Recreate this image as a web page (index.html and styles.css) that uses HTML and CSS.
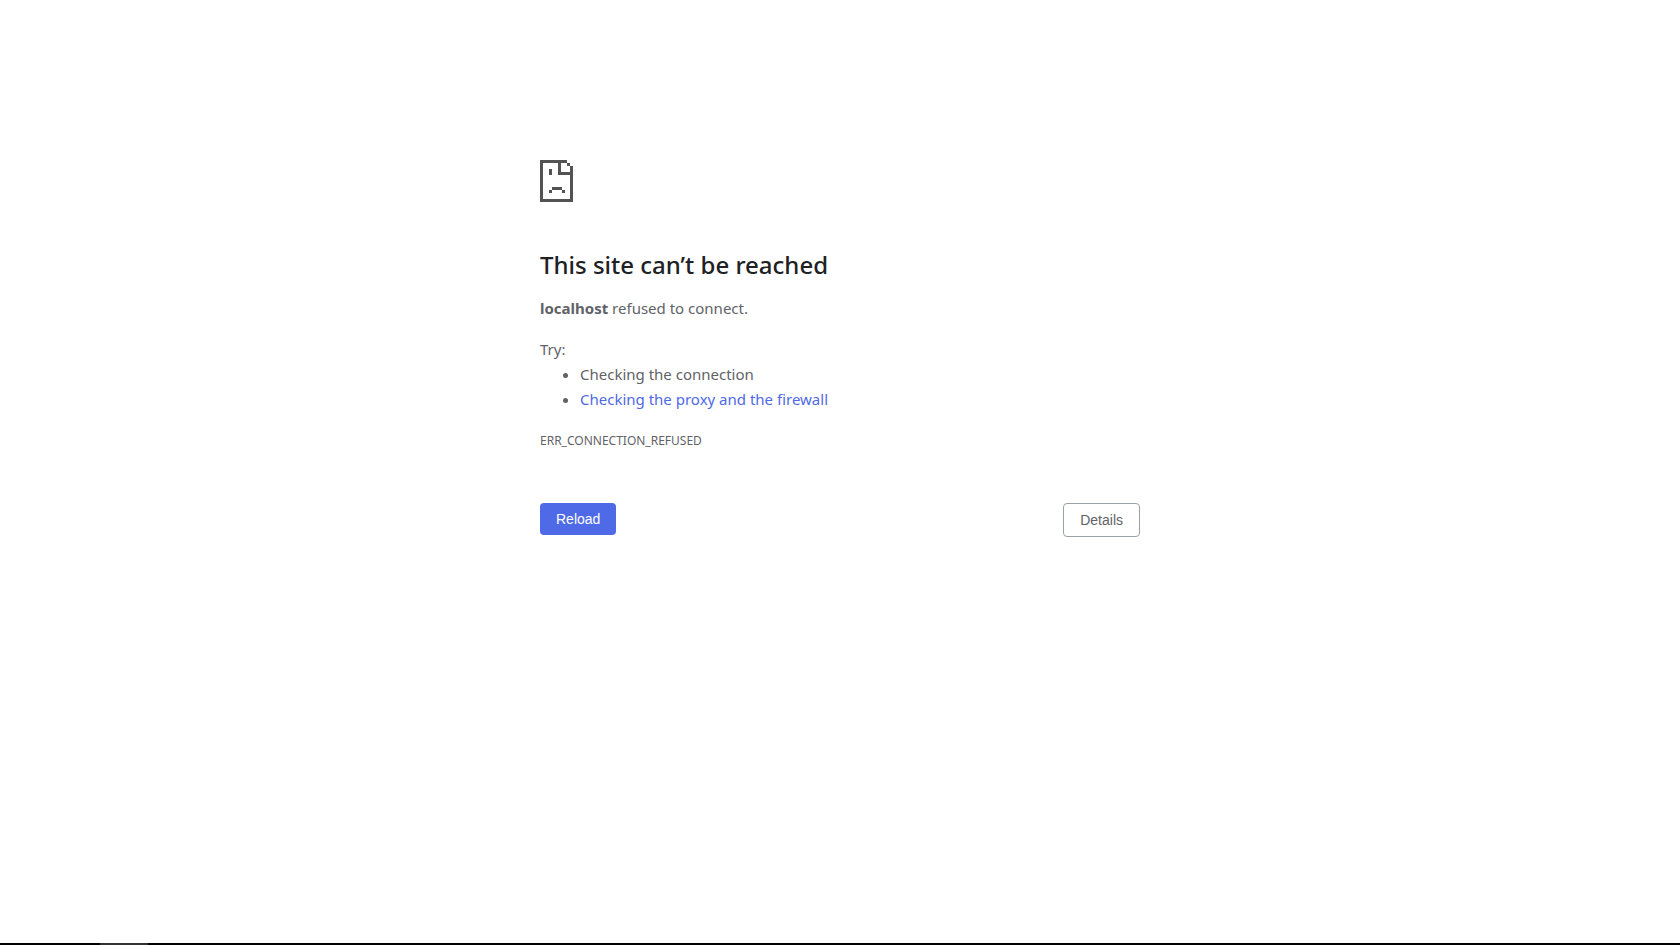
FILE: index.html
```html
<!DOCTYPE html>
<html lang="en">
<head>
  <meta charset="UTF-8">
  <meta name="viewport" content="width=device-width, initial-scale=1.0">
  <title>localhost</title>
  <link rel="stylesheet" href="styles.css">
</head>
<body>
  <main class="error-page">
    <svg class="icon" viewBox="0 0 33 42" shape-rendering="crispEdges" aria-hidden="true">
      <path d="M0 0h27v3H21v9h12v30H0zM3 3v36h27V15H18V3zM27 3h3v3H27zM30 6h3v6h-3zM9 9h3v6H9zM12 27h10v3H12zM9 30h3v3H9zM22 30h3v3H22z" fill-rule="evenodd"/>
    </svg>
    <h1>This site can’t be reached</h1>
    <p><strong>localhost</strong> refused to connect.</p>
    <div class="suggestions">
      <p>Try:</p>
      <ul>
        <li>Checking the connection</li>
        <li><a href="#buttons">Checking the proxy and the firewall</a></li>
      </ul>
    </div>
    <div class="error-code">ERR_CONNECTION_REFUSED</div>
    <div class="buttons" id="buttons">
      <button type="button" class="reload">Reload</button>
      <button type="button" class="details">Details</button>
    </div>
  </main>
  <footer class="taskbar"><div class="taskbar-item"></div></footer>
</body>
</html>
```
FILE: styles.css
```css
body {
  margin: 0;
  min-height: 100vh;
  display: flex;
  flex-direction: column;
  background: #fff;
  color: #5f6368;
  font-family: "Noto Sans", "Open Sans", sans-serif;
  font-size: 15px;
  line-height: 25px;
}
.error-page {
  box-sizing: border-box;
  width: 100%;
  max-width: 600px;
  margin: 0 auto;
  padding-top: 160px;
  flex: 1;
}
.icon {
  display: block;
  width: 33px;
  height: 42px;
  fill: #535353;
}
h1 {
  margin: 48px 0 16px;
  color: #202124;
  font-size: 24px;
  font-weight: 500;
  line-height: 30px;
}
p {
  margin: 0;
}
.suggestions {
  margin-top: 16px;
}
ul {
  margin: 0;
  padding-left: 40px;
}
a {
  color: #4e6ae6;
  text-decoration: none;
}
.error-code {
  margin-top: 16px;
  font-size: 12px;
}
.buttons {
  display: flex;
  justify-content: space-between;
  align-items: flex-start;
  margin-top: 50px;
}
button {
  padding: 8px 16px;
  border: 0;
  border-radius: 4px;
  font-family: "Liberation Sans", Arial, sans-serif;
  font-size: 14px;
  line-height: 16px;
  cursor: pointer;
}
.reload {
  background: #4e6ae6;
  color: #fff;
}
.details {
  border: 1px solid #9aa0a6;
  background: #fff;
  color: #5f6368;
}
.taskbar {
  height: 2px;
  padding-left: 100px;
  background: #000;
}
.taskbar-item {
  width: 48px;
  height: 2px;
  background: #333;
}
```
